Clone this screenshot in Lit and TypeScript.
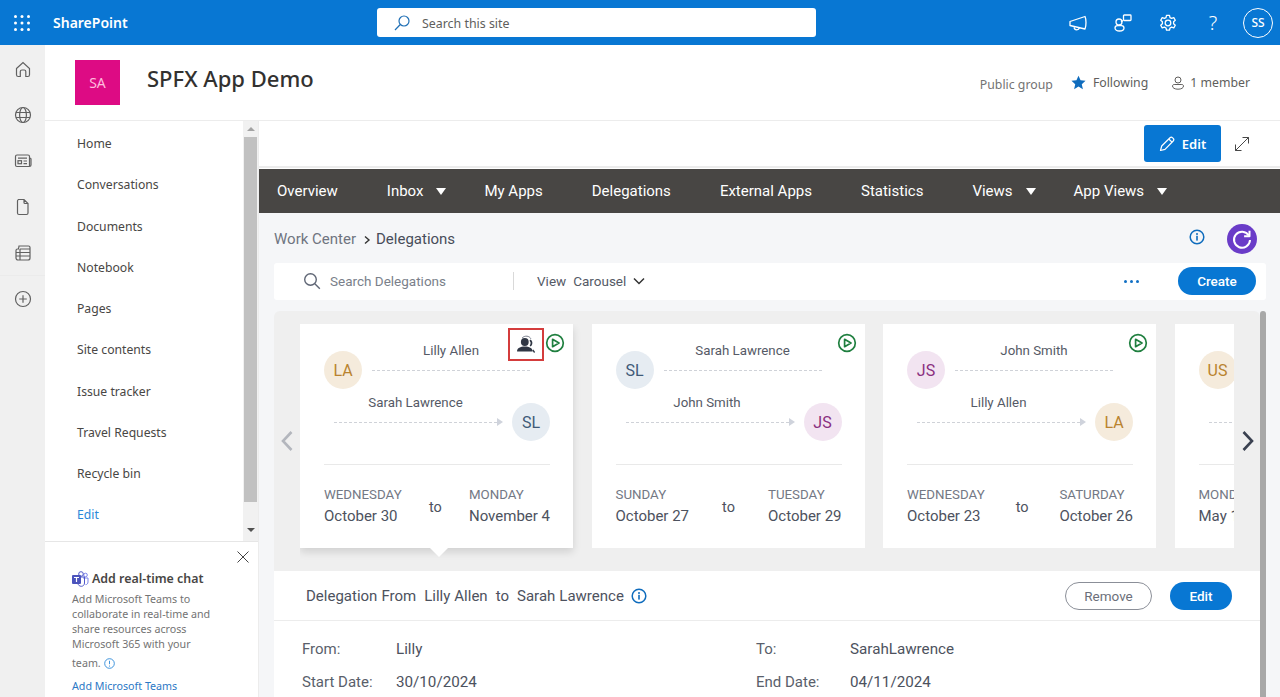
import { LitElement, css, html, svg } from 'lit'
import { customElement } from 'lit/decorators.js'

const NAV = ['Home', 'Conversations', 'Documents', 'Notebook', 'Pages', 'Site contents', 'Issue tracker', 'Travel Requests', 'Recycle bin']

const MENU = [
  { label: 'Overview' },
  { label: 'Inbox', caret: true },
  { label: 'My Apps' },
  { label: 'Delegations' },
  { label: 'External Apps' },
  { label: 'Statistics' },
  { label: 'Views', caret: true },
  { label: 'App Views', caret: true },
]

const TONES: Record<string, string> = { LA: 'tan', US: 'tan', SL: 'slate', JS: 'plum' }

const CARDS = [
  { from: 'Lilly Allen', fromI: 'LA', to: 'Sarah Lawrence', toI: 'SL', d1: 'WEDNESDAY', date1: 'October 30', d2: 'MONDAY', date2: 'November 4', active: true },
  { from: 'Sarah Lawrence', fromI: 'SL', to: 'John Smith', toI: 'JS', d1: 'SUNDAY', date1: 'October 27', d2: 'TUESDAY', date2: 'October 29' },
  { from: 'John Smith', fromI: 'JS', to: 'Lilly Allen', toI: 'LA', d1: 'WEDNESDAY', date1: 'October 23', d2: 'SATURDAY', date2: 'October 26' },
  { from: '', fromI: 'US', to: '', toI: 'LA', d1: 'MONDAY', date1: 'May 1', d2: '', date2: '' },
]

const railIcons = [
  svg`<path d="M3.5 9.5 10 3.5l6.5 6v6.2c0 1-.7 1.8-1.7 1.8h-2V12.6c0-1-.8-1.6-1.6-1.6H9c-.9 0-1.7.7-1.7 1.6v4.9h-2c-1 0-1.8-.8-1.8-1.8z"/>`,
  svg`<circle cx="10" cy="10" r="7.5"/><ellipse cx="10" cy="10" rx="3.4" ry="7.5"/><path d="M3 7.5h14M3 12.5h14"/>`,
  svg`<path d="M2.5 5.5c0-.8.6-1.5 1.5-1.5h11c.8 0 1.5.7 1.5 1.5v10H4c-.9 0-1.5-.7-1.5-1.5zM16.5 7h.5c.6 0 1 .4 1 1v6c0 .9-.7 1.5-1.5 1.5"/><path d="M5 7.2h9M10.5 10h3.500M10.500 12.700h3.500"/><rect x="5" y="9.700" width="3.500" height="3"/>`,
  svg`<path d="M5 2.500h6l4 4V16c0 .8-.7 1.500-1.500 1.500h-7.500C5.200 17.500 4.500 16.800 4.500 16V4c0-.8.700-1.500 1.500-1.500zM11 2.500V5.500c0 .6.400 1 1 1h3"/>`,
  svg`<path d="M6 3h9.500c.8 0 1.500.7 1.500 1.500V15c0 1-.8 2-2 2H5c-1 0-2-.8-2-2V7.500c0-.8.700-1.500 1.500-1.500H5.500zM3 9.500h14M3 13h14M7 6h10M7 6v11"/>`,
  svg`<circle cx="10" cy="10" r="7.500"/><path d="M10 6.200v7.600M6.200 10h7.600"/>`,
]

const infoIcon = (size: number) => html`<svg class="info" width=${size} height=${size} viewBox="0 0 16 16"><circle cx="8" cy="8" r="6.800" fill="none" stroke="currentColor" stroke-width="1.500"/><circle cx="8" cy="4.900" r="1" fill="currentColor"/><rect x="7.200" y="6.800" width="1.600" height="4.800" fill="currentColor"/></svg>`

const playIcon = html`<svg class="play" width="20" height="20" viewBox="0 0 20 20"><circle cx="10" cy="10" r="8.300" fill="none" stroke="#1f7f3f" stroke-width="1.700"/><path d="M7.600 6.300 14 10l-6.400 3.700z" fill="none" stroke="#1f7f3f" stroke-width="1.700" stroke-linejoin="round"/></svg>`

@customElement('app-root')
export class AppRoot extends LitElement {
  private avatar(initials: string) {
    return html`<span class="avatar ${TONES[initials]}">${initials}</span>`
  }

  private renderCard(c: (typeof CARDS)[number]) {
    return html`
      <article class="card ${c.active ? 'active' : ''}">
        ${c.active
          ? html`<span class="assignee"><svg width="20" height="19" viewBox="0 0 20 19">
              <path d="M6 3.200C7.300 1.600 9.200 1 11 1.200c1.700.2 3.200 1.100 3.900 2.600" fill="none" stroke="#5a6172" stroke-width=".8"/>
              <circle cx="8.800" cy="7" r="3.900" fill="#2f3644"/>
              <path d="M1 16c.3-3 3.200-4.600 7.800-4.600s7.400 1.600 7.800 4.600c0 .4-.3.600-.6.600H1.600c-.3 0-.6-.2-.6-.6z" fill="#2f3644"/>
              <path d="M14 5.200c1.300 1 1.800 2.500 1.300 4-.2.700-.7 1.300-1.300 1.600" fill="none" stroke="#2f3644" stroke-width="1.700"/>
              <path d="m16.800 15 1.800 2.500" stroke="#2f3644" stroke-width="1.300"/>
            </svg></span>`
          : ''}
        ${playIcon}
        <div class="leg">
          ${this.avatar(c.fromI)}
          <div class="leg-mid first">
            <div class="person">${c.from}</div>
            <div class="rule"><i></i></div>
          </div>
        </div>
        <div class="leg second">
          <div class="leg-mid">
            <div class="person">${c.to}</div>
            <div class="rule"><i></i><b></b></div>
          </div>
          ${this.avatar(c.toI)}
        </div>
        <div class="dates">
          <div><div class="day">${c.d1}</div><div class="date">${c.date1}</div></div>
          ${c.d2 ? html`<div class="to">to</div>` : ''}
          <div><div class="day">${c.d2}</div><div class="date">${c.date2}</div></div>
        </div>
      </article>
    `
  }

  render() {
    return html`
      <header class="suite">
        <svg class="waffle" width="16" height="16" viewBox="0 0 16 16" fill="#fff">
          ${[1.500, 8, 14.500].flatMap((y) => [1.500, 8, 14.500].map((x) => svg`<circle cx=${x} cy=${y} r="1.500"/>`))}
        </svg>
        <span class="brand">SharePoint</span>
        <div class="searchbox">
          <svg width="18" height="18" viewBox="0 0 18 18" fill="none" stroke="#1f6fb5" stroke-width="1.200"><circle cx="11" cy="7" r="5"/><path d="M7.300 10.500 2 16"/></svg>
          <span>Search this site</span>
        </div>
        <div class="suite-actions">
          <svg width="20" height="20" viewBox="0 0 20 20" fill="none" stroke="#fff" stroke-width="1.300" stroke-linejoin="round"><path d="M2 8.500 17 3.500c.6 1.300 1 3.700 1 6s-.4 4.900-1 6.500L2 12.500zM6 13.800c0 2 1.300 3 2.800 3 1.300 0 2.300-.8 2.700-2"/></svg>
          <svg width="20" height="20" viewBox="0 0 20 20" fill="none" stroke="#fff" stroke-width="1.300"><rect x="10.500" y="2" width="7.500" height="5.500" rx=".8"/><circle cx="6" cy="9" r="3"/><path d="M2 15c0-1.500 1-2.300 2.500-2.300h4C10 12.700 11 13.500 11 15c0 2-2 3-4.500 3S2 17 2 15zM10 7.500 8 9"/></svg>
          <svg width="20" height="20" viewBox="0 0 20 20" fill="none" stroke="#fff" stroke-width="1.300"><circle cx="10" cy="10" r="2.800"/><path d="M8.500 2.300h3l.5 2.300 1.600.8 2.200-.8 1.500 2.600-1.700 1.600v1.900l1.700 1.600-1.500 2.600-2.200-.8-1.600.9-.5 2.200h-3l-.5-2.200-1.600-.9-2.200.8-1.500-2.600 1.700-1.600V8.800L2.700 7.200l1.500-2.600 2.200.8 1.600-.8z" stroke-linejoin="round"/></svg>
          <span class="help">?</span>
          <span class="me">SS</span>
        </div>
      </header>

      <div class="shell">
        <aside class="rail">
          ${railIcons.map((i, n) => html`<span class="rail-item ${n === 5 ? 'sep' : ''}"><svg width="20" height="20" viewBox="0 0 20 20" fill="none" stroke="#616161" stroke-width="1.200">${i}</svg></span>`)}
        </aside>

        <div class="site">
          <section class="site-head">
            <div class="logo">SA</div>
            <h1>SPFX App Demo</h1>
            <div class="site-meta">
              <span class="public">Public group</span>
              <span class="following"><svg width="15" height="15" viewBox="0 0 16 16" fill="#0f6cbd"><path d="m8 .8 2.200 4.900 5.300.5-4 3.600 1.200 5.300L8 12.300l-4.700 2.800 1.200-5.300-4-3.600 5.300-.5z"/></svg>Following</span>
              <span class="members"><svg width="14" height="14" viewBox="0 0 14 14" fill="none" stroke="#605e5c"><circle cx="7" cy="4" r="3"/><path d="M1.500 10c0-1 .8-1.500 1.700-1.500h7.600c.9 0 1.700.5 1.700 1.500 0 2-2.200 3.200-5.500 3.200S1.500 12 1.500 10z"/></svg>1 member</span>
            </div>
          </section>

          <div class="site-body">
            <nav class="leftnav">
              <div class="nav-top">
                <div class="nav-list">
                  ${NAV.map((n) => html`<a class="nav-item">${n}</a>`)}
                  <a class="nav-item edit">Edit</a>
                </div>
                <div class="nav-scroll">
                  <span class="up"></span>
                  <span class="thumb"></span>
                  <span class="down"></span>
                </div>
              </div>
              <div class="teams">
                <svg class="close" width="12" height="12" viewBox="0 0 12 12" stroke="#444" stroke-width="1"><path d="m.5.500 11 11M11.500.500l-11 11"/></svg>
                <div class="teams-title">
                  <svg width="17" height="16" viewBox="0 0 17 16">
                    <circle cx="13.500" cy="4" r="1.800" fill="none" stroke="#7b83eb"/>
                    <path d="M11 7h5v4c0 1.600-1.100 2.700-2.500 2.700" fill="none" stroke="#7b83eb"/>
                    <circle cx="9" cy="3" r="2.300" fill="none" stroke="#5059c9"/>
                    <path d="M6 6h6.500v6c0 2-1.500 3.300-3.200 3.300-1.600 0-3-1-3.300-2.600z" fill="none" stroke="#5059c9"/>
                    <rect x="0" y="4" width="9" height="9" rx="1" fill="#4b53bc"/>
                    <path d="M2 6h5v1.100H5.100V11H3.900V7.100H2z" fill="#fff"/>
                  </svg>
                  Add real-time chat
                </div>
                <p>Add Microsoft Teams to collaborate in real-time and share resources across Microsoft 365 with your</p>
                <p class="last">team. <svg width="11" height="11" viewBox="0 0 16 16" fill="none" stroke="#2b88d8" stroke-width="1.300"><circle cx="8" cy="8" r="7"/><path d="M8 4v5M8 11v1.500"/></svg></p>
                <a>Add Microsoft Teams</a>
              </div>
            </nav>

            <main class="main">
              <div class="commandbar">
                <button class="edit-page">
                  <svg width="16" height="16" viewBox="0 0 16 16" fill="none" stroke="#fff" stroke-width="1.200" stroke-linejoin="round"><path d="M1.500 14.500 2.700 10 11 1.800c.7-.7 1.900-.7 2.600 0l.6.600c.7.700.7 1.900 0 2.600L6 13.300z"/><path d="m9.800 3 3.200 3.200"/></svg>
                  Edit
                </button>
                <svg class="expand" width="16" height="16" viewBox="0 0 16 16" fill="none" stroke="#333" stroke-width=".9"><path d="M1.500 14.500 14.500 1.500M8.500 1.500h6v6M1.500 8.500v6h6"/></svg>
              </div>

              <div class="menu">
                ${MENU.map((m) => html`<span class="menu-item ${m.caret ? 'has-caret' : ''}">${m.label}${m.caret ? html`<i class="caret"></i>` : ''}</span>`)}
              </div>

              <div class="content">
                <div class="crumbs">
                  <span class="crumb">Work Center</span>
                  <svg width="9" height="10" viewBox="0 0 9 10" fill="none" stroke="#333" stroke-width="1.400"><path d="m2 1.500 4 3.500-4 3.500"/></svg>
                  <span class="crumb current">Delegations</span>
                  <span class="crumb-info">${infoIcon(16)}</span>
                  <span class="refresh"><svg width="22" height="22" viewBox="0 0 22 22" fill="none" stroke="#fff" stroke-width="2"><path d="M17.800 7.500A8 8 0 1 0 19 12"/><path d="M18.500 2.800v5.400h-5.400" stroke-linejoin="round"/></svg></span>
                </div>

                <div class="toolbar">
                  <div class="tool-search">
                    <svg width="18" height="18" viewBox="0 0 18 18" fill="none" stroke="#5f6675" stroke-width="1.400"><circle cx="7.500" cy="7.500" r="5.800"/><path d="m11.800 11.800 5 5"/></svg>
                    <span>Search Delegations</span>
                  </div>
                  <div class="view">
                    <span>View</span><span>Carousel</span>
                    <svg width="12" height="8" viewBox="0 0 12 8" fill="none" stroke="#333" stroke-width="1.500"><path d="m1 1.500 5 5 5-5"/></svg>
                  </div>
                  <span class="dots"><i></i><i></i><i></i></span>
                  <button class="pill primary create">Create</button>
                </div>

                <div class="scroller">
                  <div class="scroll-inner">
                    <section class="carousel">
                      <svg class="arrow prev" width="14" height="22" viewBox="0 0 14 22" fill="none" stroke="#b3b6bd" stroke-width="2.600"><path d="M11.500 2 3 11l8.500 9"/></svg>
                      <div class="track">${CARDS.map((c) => this.renderCard(c))}</div>
                      <svg class="arrow next" width="14" height="22" viewBox="0 0 14 22" fill="none" stroke="#3a4150" stroke-width="2.600"><path d="m2.500 2 8.500 9-8.500 9"/></svg>
                    </section>

                    <section class="detail">
                      <div class="detail-head">
                        <span class="detail-title">Delegation From&nbsp; Lilly Allen&nbsp; to&nbsp; Sarah Lawrence</span>
                        ${infoIcon(16)}
                        <button class="pill ghost">Remove</button>
                        <button class="pill primary small">Edit</button>
                      </div>
                      <div class="fields">
                        <span class="k">From:</span><span class="v">Lilly</span>
                        <span class="k">To:</span><span class="v">SarahLawrence</span>
                        <span class="k">Start Date:</span><span class="v">30/10/2024</span>
                        <span class="k">End Date:</span><span class="v">04/11/2024</span>
                      </div>
                    </section>
                  </div>
                  <div class="page-thumb"></div>
                </div>
              </div>
            </main>
          </div>
        </div>
      </div>
    `
  }

  static styles = css`
    :host {
      display: block;
      width: 1280px;
      height: 697px;
      overflow: hidden;
      font-family: 'Noto Sans', 'Open Sans', sans-serif;
      color: #323130;
      background: #fff;
    }
    button { font: inherit; border: 0; }
    .suite {
      height: 45px;
      background: #0877d3;
      display: flex;
      align-items: center;
      color: #fff;
    }
    .waffle { margin-left: 14px; }
    .brand { margin-left: 23px; font-size: 14px; font-weight: 600; width: 324px; }
    .searchbox {
      width: 439px;
      height: 29px;
      box-sizing: border-box;
      background: #fff;
      border-radius: 3px;
      display: flex;
      align-items: center;
      gap: 11px;
      padding-left: 16px;
      color: #605e5c;
      font-size: 12.400px;
    }
    .searchbox span { margin-top: 1px; }
    .suite-actions { margin-left: auto; display: flex; align-items: center; margin-right: 7px; }
    .suite-actions svg { margin-right: 25px; }
    .help { font-size: 20px; width: 14px; text-align: center; margin-right: 23px; margin-left: 3px; font-weight: 300; }
    .me {
      width: 28px;
      height: 28px;
      border: 1px solid #fff;
      border-radius: 50%;
      display: flex;
      align-items: center;
      justify-content: center;
      font-size: 12px;
      font-weight: 500;
    }

    .shell { display: flex; height: 652px; }
    .rail { width: 45px; background: #f0f0f0; padding-top: 1px; box-sizing: border-box; display: flex; flex-direction: column; }
    .rail-item { height: 46px; display: flex; align-items: center; justify-content: center; }
    .rail-item.sep { box-shadow: 0 -1px 0 #ebebeb; }
    .site { flex: 1; display: flex; flex-direction: column; min-width: 0; }

    .site-head {
      height: 76px;
      box-sizing: border-box;
      border-bottom: 1px solid #ececec;
      display: flex;
      align-items: center;
      padding: 0 30px;
      flex: none;
    }
    .logo {
      width: 45px;
      height: 45px;
      background: #dd0b84;
      color: #fbd;
      display: flex;
      align-items: center;
      justify-content: center;
      font-size: 14px;
    }
    h1 { margin: 0 0 9px 27px; font-size: 22px; font-weight: 500; color: #323130; }
    .site-meta { margin-left: auto; display: flex; align-items: center; font-size: 12.300px; color: #605e5c; margin-right: 0; }
    .public { margin-right: 18px; margin-top: 3px; color: #737373; }
    .following { display: flex; align-items: center; gap: 7px; margin-right: 23px; }
    .members { display: flex; align-items: center; gap: 5px; }

    .site-body { flex: 1; display: flex; min-height: 0; }
    .leftnav { width: 214px; flex: none; display: flex; flex-direction: column; border-right: 1px solid #ececec; box-sizing: border-box; }
    .nav-top { height: 421px; display: flex; flex: none; border-bottom: 1px solid #e6e6e6; box-sizing: border-box; }
    .nav-list { flex: 1; display: flex; flex-direction: column; padding-top: 2px; }
    .nav-item { height: 41.250px; display: flex; align-items: center; padding-left: 32px; font-size: 12.200px; color: #484644; flex: none; }
    .nav-item.edit { color: #2b88d8; }
    .nav-scroll { width: 15px; margin-right: 0; background: #f1f1f1; display: flex; flex-direction: column; align-items: center; }
    .nav-scroll .thumb { width: 13px; height: 365px; background: #c1c1c1; }
    .up, .down { width: 0; height: 0; border: 4px solid transparent; }
    .up { border-bottom: 4px solid #a3a3a3; border-top: 0; margin: 6px 0; }
    .down { border-top: 4px solid #505050; border-bottom: 0; margin-top: 26px; }

    .teams { position: relative; padding: 28px 30px 0 27px; font-size: 10.700px; color: #737373; line-height: 15px; }
    .close { position: absolute; top: 9px; right: 9px; }
    .teams-title { display: flex; align-items: center; gap: 3px; font-size: 12.400px; font-weight: 600; color: #484644; margin-bottom: 5px; line-height: 17px; white-space: nowrap; margin-right: -20px; }
    .teams p { margin: 0; }
    .teams p.last { margin-top: 4px; display: flex; align-items: center; gap: 3px; }
    .teams a { display: block; color: #2b78c5; margin-top: 8px; white-space: nowrap; }

    .main { flex: 1; min-width: 0; display: flex; flex-direction: column; font-family: Roboto, 'Noto Sans', sans-serif; }
    .commandbar {
      height: 45px;
      border-bottom: 2px solid #ececec;
      box-sizing: content-box;
      display: flex;
      align-items: center;
      justify-content: flex-end;
      flex: none;
      padding-right: 30px;
      margin-bottom: 1px;
    }
    .edit-page {
      width: 77px;
      height: 37px;
      background: #0877d3;
      color: #fff;
      border-radius: 3px;
      display: flex;
      align-items: center;
      justify-content: center;
      gap: 7px;
      font-family: 'Noto Sans', sans-serif;
      font-size: 13px;
      font-weight: 600;
      margin-top: 0;
    }
    .expand { margin-left: 13px; }

    .menu { height: 44px; background: #484644; display: flex; align-items: center; gap: 49px; padding-left: 18px; color: #fff; font-size: 15px; flex: none; }
    .menu-item { display: flex; align-items: center; }
    .caret { width: 0; height: 0; border: 5px solid transparent; border-top: 7px solid #fff; border-bottom: 0; margin: 1px -11px 0 13px; }

    .content { flex: 1; background: #f5f6f8; padding-left: 15px; padding-right: 14px; min-height: 0; overflow: hidden; }
    .crumbs { height: 50px; display: flex; align-items: center; font-size: 15px; box-sizing: border-box; padding-top: 2px; }
    .crumb { color: #6f7480; }
    .crumbs > svg { margin: 1px 4px 0 7px; }
    .crumb.current { color: #484d5a; }
    .crumb-info { margin-left: auto; display: flex; margin-right: 22px; margin-top: -4px; color: #0f6cbd; }
    .refresh {
      width: 30px;
      height: 30px;
      margin-right: 9px;
      border-radius: 50%;
      background: #6a3cc8;
      display: flex;
      align-items: center;
      justify-content: center;
    }

    .toolbar { height: 37px; background: #fff; display: flex; align-items: center; border-radius: 3px; font-size: 13.500px; padding-bottom: 1px; box-sizing: border-box; }
    .tool-search { width: 210px; height: 18px; box-sizing: content-box; display: flex; align-items: center; gap: 9px; padding-left: 29px; color: #7a7f8a; border-right: 1px solid #d9d9d9; flex: none; }
    .view { display: flex; align-items: center; gap: 7px; margin-left: 23px; color: #555a66; }
    .dots { margin-left: auto; display: flex; gap: 3px; margin-right: 39px; }
    .dots i { width: 3px; height: 3px; background: #1170c4; border-radius: 50%; }
    .pill { border-radius: 15px; height: 28px; display: flex; align-items: center; justify-content: center; font-family: Roboto, sans-serif; font-size: 13.500px; }
    .primary { background: #0877d3; color: #fff; }
    .create { width: 78px; margin-right: 10px; font-weight: 500; }
    .small { width: 62px; font-weight: 500; }
    .ghost { width: 87px; background: #fff; border: 1px solid #8b8f98; color: #6b6f7a; margin-left: auto; margin-right: 18px; box-sizing: border-box; }

    .scroller { display: flex; margin-top: 11px; }
    .scroll-inner { width: 986px; flex: none; }
    .page-thumb { width: 6px; background: #a8a8a8; border-radius: 3px 3px 0 0; height: 400px; }
    .carousel { height: 260px; background: #efefef; position: relative; padding: 13px 25px 0 26px; box-sizing: border-box; border-radius: 6px 6px 0 0; }
    .arrow { position: absolute; top: 119px; }
    .prev { left: 6px; }
    .next { right: 5px; }
    .track { display: flex; gap: 18.500px; overflow: hidden; width: 934px; padding-bottom: 20px; margin-bottom: -20px; }
    .card {
      width: 273px;
      height: 224px;
      flex: none;
      background: #fff;
      box-sizing: border-box;
      padding: 17px 23px 0 24px;
      position: relative;
    }
    .card.active { box-shadow: 0 4px 8px rgba(0, 0, 0, 0.13); }
    .card.active::after {
      content: '';
      position: absolute;
      left: 130px;
      bottom: -9px;
      width: 0;
      height: 0;
      border-left: 9px solid transparent;
      border-right: 9px solid transparent;
      border-top: 9px solid #fff;
    }
    .assignee {
      position: absolute;
      left: 208px;
      top: 4px;
      width: 36px;
      height: 33px;
      box-sizing: border-box;
      border: 2px solid #d43c3c;
      display: flex;
      align-items: center;
      justify-content: center;
    }
    .play { position: absolute; left: 245px; top: 9px; }
    .leg { display: flex; align-items: flex-end; }
    .leg.second { margin-top: 4px; }
    .leg-mid { flex: 1; text-align: center; min-width: 0; }
    .leg-mid.first { padding-left: 10px; margin-right: 20px; }
    .leg.second .leg-mid { margin-left: 10px; margin-right: 9px; }
    .person { font-size: 13.300px; line-height: 18px; height: 18px; margin-top: 1px; margin-bottom: -9px; color: #555a66; white-space: nowrap; }
    .leg.second .person { padding-right: 6px; }
    .rule { height: 38px; display: flex; align-items: center; }
    .rule i { flex: 1; border-top: 1px dashed #cfd2d8; }
    .rule b { width: 0; height: 0; border-left: 6px solid #cfd3dc; border-top: 4px solid transparent; border-bottom: 4px solid transparent; }
    .avatar {
      width: 38px;
      height: 38px;
      border-radius: 50%;
      display: flex;
      align-items: center;
      justify-content: center;
      font-size: 16px;
      flex: none;
    }
    .tan { background: #f5ebdc; color: #b9832f; }
    .slate { background: #e6ecf2; color: #3f5a78; }
    .plum { background: #f2e4f1; color: #8a2f80; }
    .dates {
      margin-top: 23px;
      padding-top: 21px;
      border-top: 1px solid #e9e9e9;
      display: flex;
      justify-content: space-between;
      align-items: center;
    }
    .day { font-size: 13.300px; line-height: 18px; color: #737884; white-space: nowrap; }
    .date { font-size: 15px; line-height: 22px; color: #4d525e; white-space: nowrap; margin-top: 1px; }
    .to { font-size: 14.500px; color: #4d525e; margin-top: 2px; }

    .detail { background: #fff; }
    .detail-head { height: 50px; border-bottom: 1px solid #ececec; box-sizing: border-box; display: flex; align-items: center; padding: 1px 28px 0 32px; }
    .detail-title { font-size: 15px; color: #4d525e; margin-right: 7px; word-spacing: .3px; }
    .info { color: #0f6cbd; }
    .fields {
      display: grid;
      grid-template-columns: 94px 360px 94px 1fr;
      grid-auto-rows: 33px;
      padding: 11px 0 0 28px;
      font-size: 15px;
      align-items: center;
    }
    .k { color: #5a5f6b; }
    .v { color: #4d525e; font-size: 15.200px; }
  `
}

declare global {
  interface HTMLElementTagNameMap {
    'app-root': AppRoot
  }
}
